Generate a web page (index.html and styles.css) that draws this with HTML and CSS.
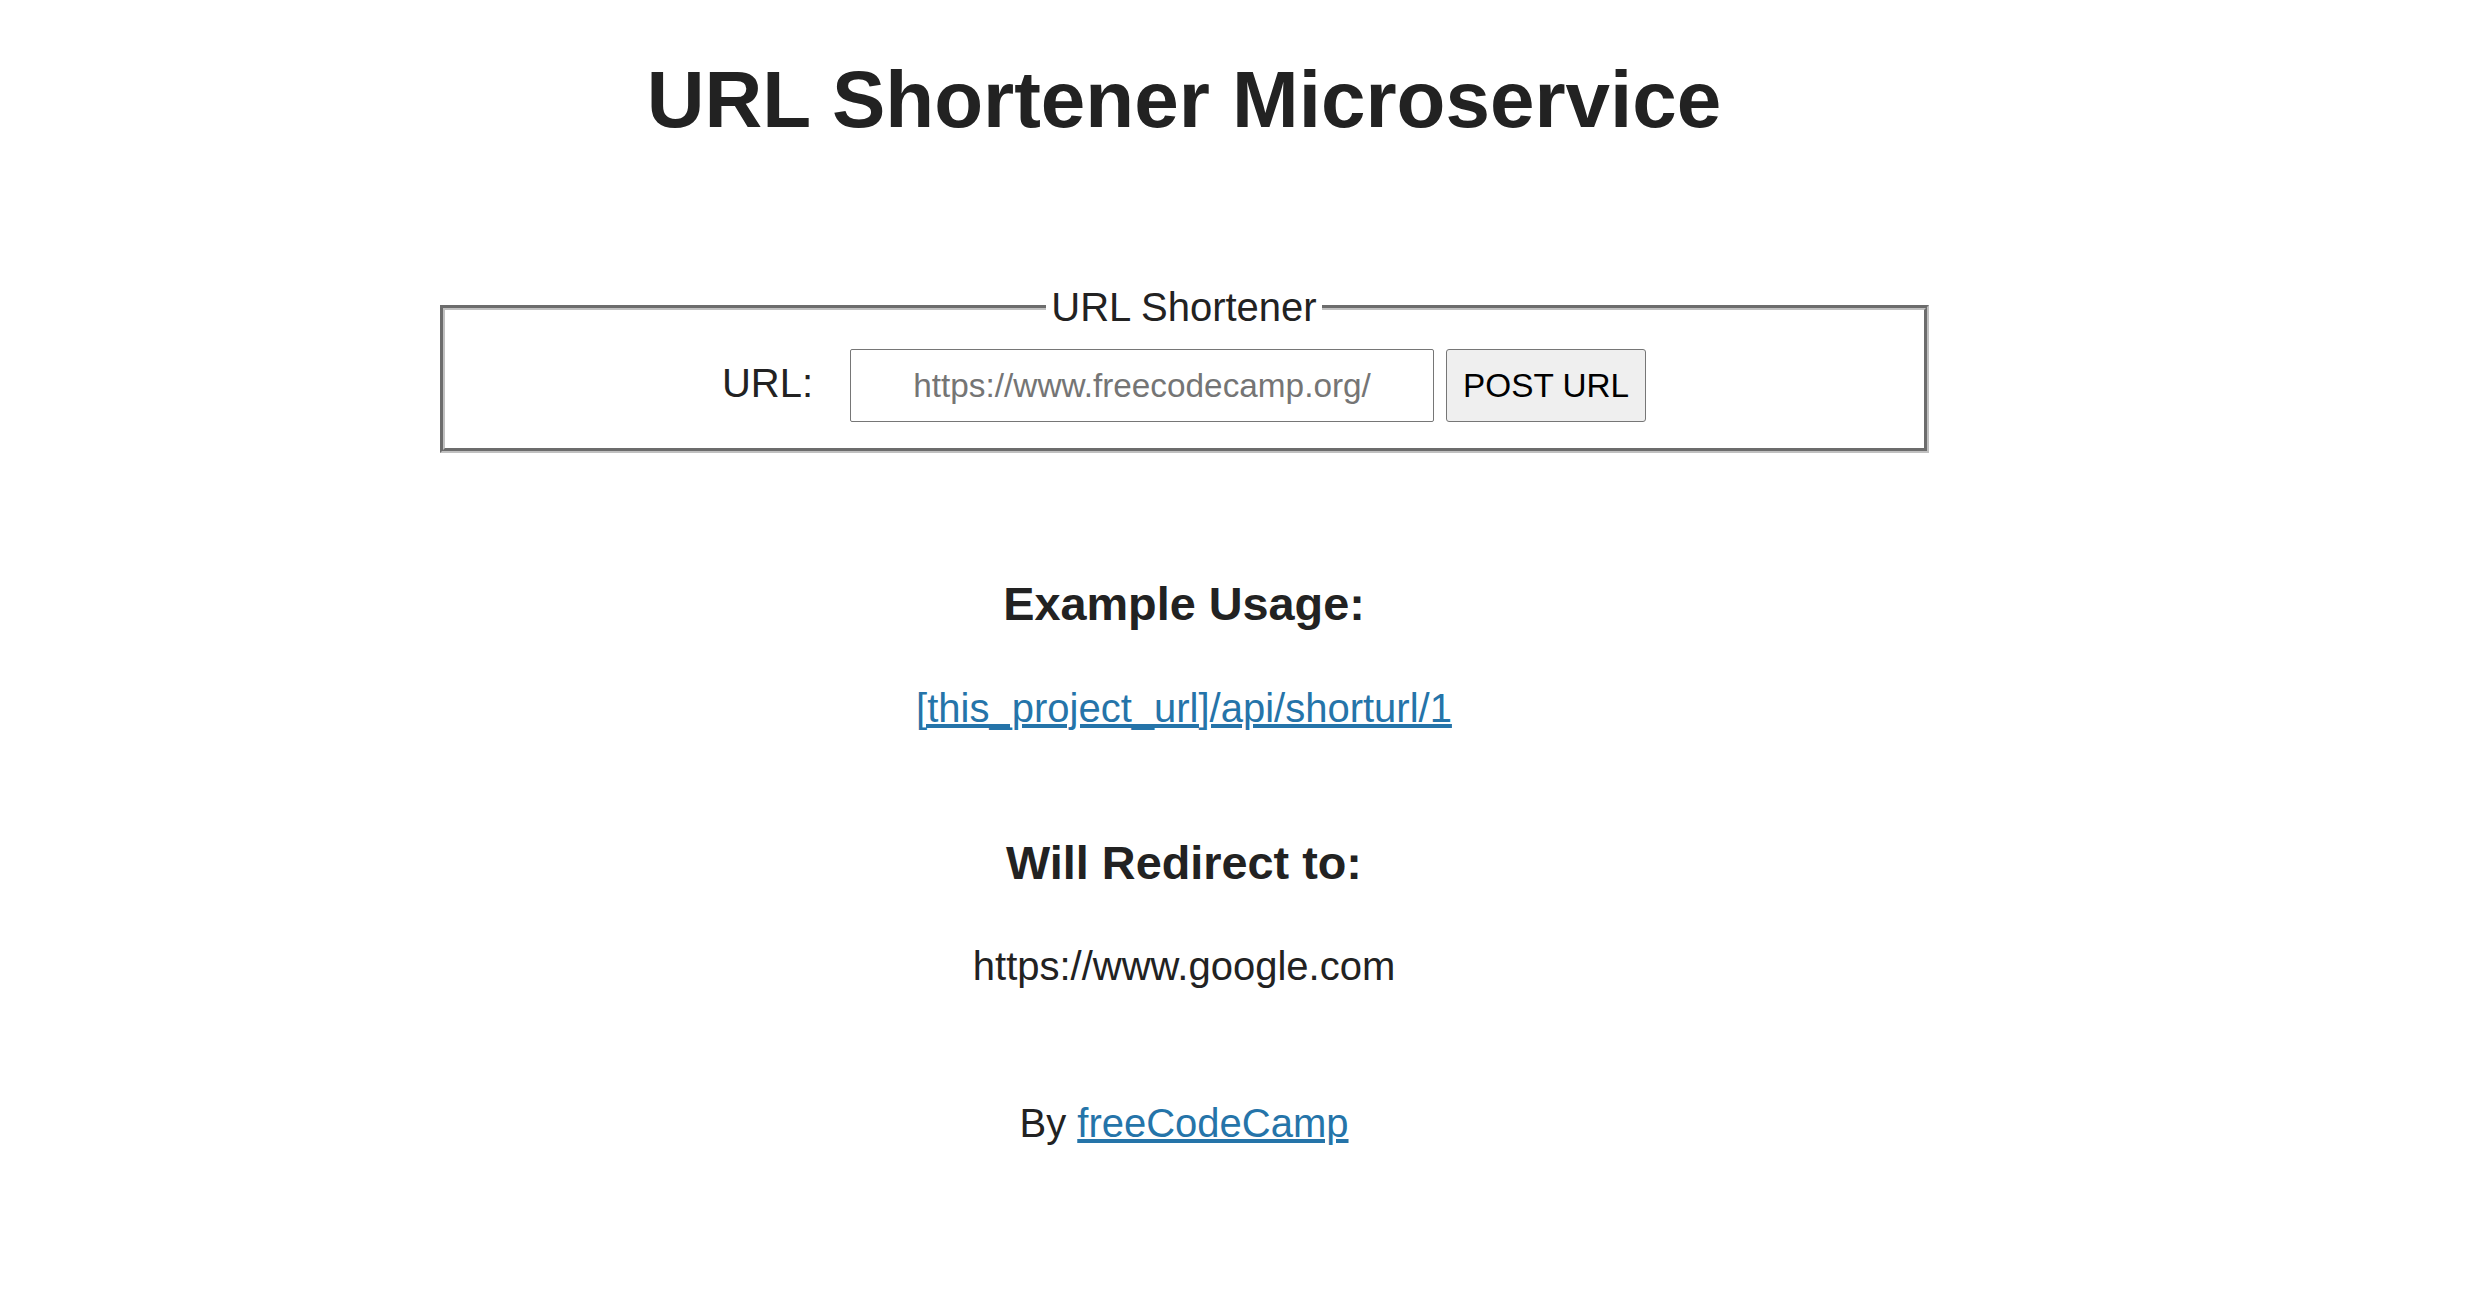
FILE: index.html
```html
<!DOCTYPE html>
<html lang="en">
<head>
<meta charset="utf-8">
<title>URL Shortener Microservice | freeCodeCamp.org</title>
<link rel="stylesheet" href="styles.css">
</head>
<body>
<div class="page">
  <h1 class="title">URL Shortener Microservice</h1>
  <main class="main">
    <form class="shorten-form" action="api/shorturl" method="POST">
      <fieldset class="shorten-fieldset">
        <legend class="shorten-legend">URL Shortener</legend>
        <div class="url-row">
          <label class="url-label" for="url_input">URL:</label>
          <input class="url-input" id="url_input" type="text" name="url" placeholder="https://www.freecodecamp.org/">
          <input class="url-submit" type="submit" value="POST URL">
        </div>
      </fieldset>
    </form>
    <section class="usage">
      <h3 class="usage-title">Example Usage:</h3>
      <p class="usage-text"><a class="link" href="api/shorturl/1">[this_project_url]/api/shorturl/1</a></p>
      <h3 class="usage-title usage-title-next">Will Redirect to:</h3>
      <p class="usage-text">https://www.google.com</p>
    </section>
  </main>
  <footer class="footer">
    <p class="footer-text">By <a class="link" href="https://www.freecodecamp.org/">freeCodeCamp</a></p>
  </footer>
</div>
</body>
</html>
```

FILE: styles.css
```css
html,
body {
  margin: 0;
  padding: 0;
  background: #ffffff;
}

body {
  font-family: "Liberation Sans", Arial, sans-serif;
  font-size: 40px;
  line-height: 56px;
  color: #222222;
}

.page {
  width: 2368px;
  text-align: center;
  padding-top: 44px;
}

.title {
  margin: 0;
  font-size: 80px;
  line-height: 112px;
  font-weight: bold;
  color: #222222;
}

.shorten-form {
  margin: 123px 0 0;
}

.shorten-fieldset {
  box-sizing: border-box;
  width: 1489px;
  margin: 0 auto;
  padding: 14px 30px 26px;
  border: 5px groove rgb(192, 192, 192);
  min-inline-size: 0;
}

.shorten-legend {
  margin: 0 auto;
  padding: 0 5px;
  font-size: 40px;
  line-height: 56px;
  color: #222222;
}

.url-row {
  display: flex;
  justify-content: center;
  align-items: baseline;
}

.url-label {
  margin-right: 37px;
  color: #222222;
}

.url-input {
  box-sizing: border-box;
  width: 584px;
  height: 73px;
  margin: 0;
  padding: 0 12px;
  border: 1px solid #767676;
  border-radius: 2px;
  background: #ffffff;
  font-family: "Liberation Sans", Arial, sans-serif;
  font-size: 33.33px;
  color: #222222;
  text-align: center;
}

.url-input::placeholder {
  color: #757575;
  opacity: 1;
}

.url-submit {
  box-sizing: border-box;
  width: 200px;
  height: 73px;
  margin: 0 0 0 12px;
  padding: 0;
  border: 1px solid #767676;
  border-radius: 3px;
  background: #efefef;
  font-family: "Liberation Sans", Arial, sans-serif;
  font-size: 33.33px;
  color: #000000;
}

.usage {
  margin-top: 119px;
}

.usage-title {
  margin: 0;
  font-size: 46.8px;
  line-height: 65.5px;
  font-weight: bold;
}

.usage-title-next {
  margin-top: 95px;
}

.usage-text {
  margin: 42px 0 0;
}

.link {
  color: #2574a9;
}

.footer {
  margin-top: 101px;
}

.footer-text {
  margin: 0;
}
```
